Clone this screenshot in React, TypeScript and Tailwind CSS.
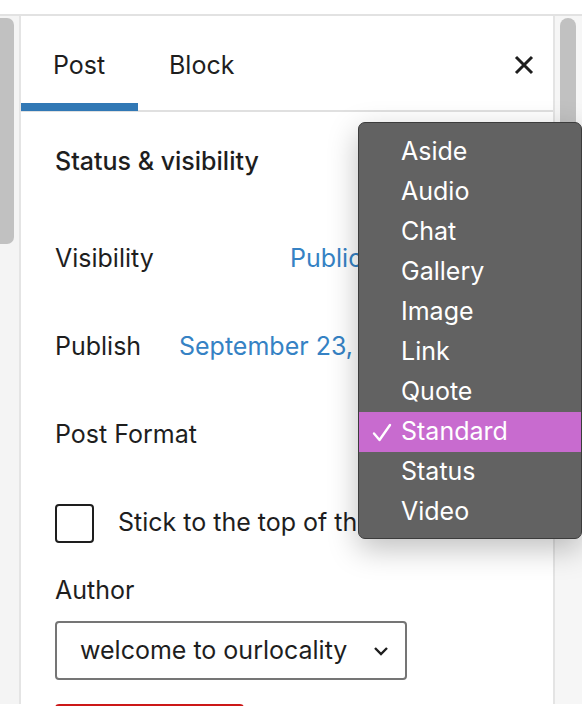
import React from 'react';

const formats = ['Aside', 'Audio', 'Chat', 'Gallery', 'Image', 'Link', 'Quote', 'Standard', 'Status', 'Video'];

function Row({ label, value, valueClass }: { label: string; value?: string; valueClass?: string }) {
  return (
    <div className="flex h-[88px] items-center whitespace-nowrap">
      <span className="w-[125px] shrink-0 text-[#1e1e1e]">{label}</span>
      {value && <span className={`text-[#3582c4] ${valueClass ?? ''}`}>{value}</span>}
    </div>
  );
}

function FormatMenu() {
  return (
    <div className="absolute left-[358px] top-[122px] w-[224px] rounded-[7px] border border-[#3c3c3c] bg-[#626262] pt-[9px] pb-[6px] shadow-[0_10px_30px_rgba(0,0,0,0.25)]">
      {formats.map((f) => (
        <div
          key={f}
          className={`relative flex h-[40px] items-center pl-[42px] text-white ${f === 'Standard' ? 'bg-[#c86bcf]' : ''}`}
        >
          {f === 'Standard' && (
            <svg className="absolute left-[13px] top-[11px]" width="20" height="19" viewBox="0 0 20 19" fill="none">
              <path d="M2 10.5 L7.5 17 L18 2" stroke="white" strokeWidth="2.4" strokeLinecap="round" strokeLinejoin="round" />
            </svg>
          )}
          {f}
        </div>
      ))}
    </div>
  );
}

export default function App() {
  return (
    <div
      className="relative h-[706px] w-[582px] overflow-hidden bg-white text-[25px] text-[#1e1e1e]"
      style={{ fontFamily: 'Inter, "Noto Sans", sans-serif' }}
    >
      <div className="h-[16px] border-b-2 border-[#e2e2e2]" />
      <div className="flex h-[688px]">
        {/* left gutter */}
        <div className="w-[19px] shrink-0 bg-[#f4f4f4] pt-[2px]">
          <div className="h-[226px] w-[14px] rounded-r-[7px] bg-[#c1c1c1]" />
        </div>
        <div className="w-[2px] shrink-0 bg-[#e4e4e4]" />

        {/* sidebar panel */}
        <div className="flex w-[532px] shrink-0 flex-col">
          <div className="flex h-[96px] shrink-0 items-stretch border-b-2 border-[#e0e0e0]">
            <div className="relative flex w-[117px] items-center pl-[32px] pt-[5px]">
              Post
              <div className="absolute -bottom-[1px] left-0 h-[8px] w-full bg-[#3178b5]" />
            </div>
            <div className="flex items-center pl-[31px] pt-[5px]">Block</div>
            <div className="ml-auto flex items-center pr-[18px] pt-[3px]">
              <svg width="22" height="22" viewBox="0 0 22 22">
                <path d="M3 3 L19 19 M19 3 L3 19" stroke="#1e1e1e" strokeWidth="3" strokeLinecap="butt" />
              </svg>
            </div>
          </div>

          <div className="shrink-0 px-[34px]">
            <div className="flex h-[100px] items-center font-medium">Status &amp; visibility</div>
            <div className="mt-[3px]">
              <Row label="Visibility" value="Public" valueClass="ml-[110px]" />
              <Row label="Publish" value="September 23, 2021 10:15 am" valueClass="-ml-[1px]" />
              <Row label="Post Format" />
            </div>
            <div className="flex h-[88px] items-center gap-[24px] whitespace-nowrap">
              <div className="h-[39px] w-[39px] shrink-0 rounded-[4px] border-2 border-[#1e1e1e]" />
              <span>Stick to the top of the blog</span>
            </div>
            <div className="mt-[8px] h-[30px] leading-[30px]">Author</div>
            <div className="mt-[16px] flex h-[59px] w-[352px] items-center justify-between rounded-[4px] border-2 border-[#757575] pl-[23px] pr-[16px]">
              <span>welcome to ourlocality</span>
              <svg width="16" height="10" viewBox="0 0 16 10" fill="none">
                <path d="M2 2 L8 8 L14 2" stroke="#1e1e1e" strokeWidth="2.4" />
              </svg>
            </div>
            <div className="mt-[24px] h-[40px] w-[189px] rounded-t-[4px] border-2 border-[#cc1818]" />
          </div>
        </div>

        <div className="w-[2px] shrink-0 bg-[#e4e4e4]" />
        {/* right gutter */}
        <div className="flex-1 bg-[#f6f6f6] pt-[2px] pl-[5px]">
          <div className="h-[300px] w-[16px] rounded-[8px] bg-[#c1c1c1]" />
        </div>
      </div>

      <FormatMenu />
    </div>
  );
}
